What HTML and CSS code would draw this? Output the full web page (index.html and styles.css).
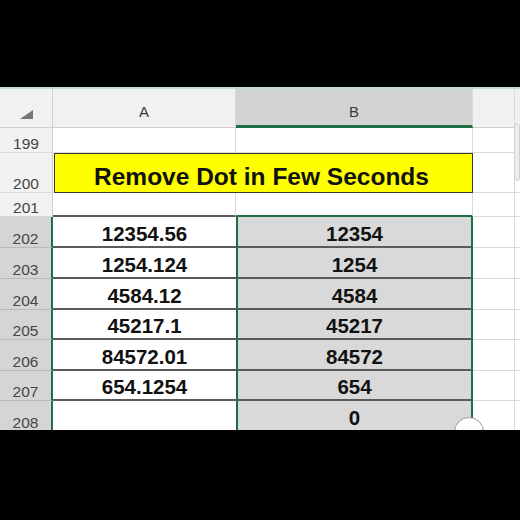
FILE: index.html
```html
<!DOCTYPE html>
<html>
<head>
<meta charset="utf-8">
<link rel="stylesheet" href="styles.css">
</head>
<body>
<div class="frame">
  <div class="bar"></div>
  <div class="sheet">
    <div class="grid">
      <div class="corner"><span class="tri"></span></div>
      <div class="colh">A</div>
      <div class="colh sel">B</div>
      <div class="colh"></div>
      <div class="colh last"></div>

      <div class="rowh">199</div>
      <div class="cell"></div>
      <div class="cell"></div>
      <div class="cell"></div>
      <div class="cell last"></div>

      <div class="rowh">200</div>
      <div class="cell title">Remove Dot in Few Seconds</div>
      <div class="cell"></div>
      <div class="cell last"></div>

      <div class="rowh">201</div>
      <div class="cell pre-a"></div>
      <div class="cell pre-b"></div>
      <div class="cell"></div>
      <div class="cell last"></div>

      <div class="rowh on">202</div>
      <div class="cell a">12354.56</div>
      <div class="cell b">12354</div>
      <div class="cell"></div>
      <div class="cell last"></div>

      <div class="rowh on">203</div>
      <div class="cell a">1254.124</div>
      <div class="cell b">1254</div>
      <div class="cell"></div>
      <div class="cell last"></div>

      <div class="rowh on">204</div>
      <div class="cell a">4584.12</div>
      <div class="cell b">4584</div>
      <div class="cell"></div>
      <div class="cell last"></div>

      <div class="rowh on">205</div>
      <div class="cell a">45217.1</div>
      <div class="cell b">45217</div>
      <div class="cell"></div>
      <div class="cell last"></div>

      <div class="rowh on">206</div>
      <div class="cell a">84572.01</div>
      <div class="cell b">84572</div>
      <div class="cell"></div>
      <div class="cell last"></div>

      <div class="rowh on">207</div>
      <div class="cell a">654.1254</div>
      <div class="cell b">654</div>
      <div class="cell"></div>
      <div class="cell last"></div>

      <div class="rowh on">208</div>
      <div class="cell a"></div>
      <div class="cell b">0</div>
      <div class="cell"></div>
      <div class="cell last"></div>
    </div>
    <div class="scroll"></div>
    <div class="handle"></div>
  </div>
  <div class="bar bottom"></div>
</div>
</body>
</html>
```

FILE: styles.css
```css
* { box-sizing: border-box; }
html, body { margin: 0; padding: 0; background: #000; }
body { font-family: "Liberation Sans", Arial, sans-serif; }

.frame {
  width: 520px;
  height: 520px;
  display: flex;
  flex-direction: column;
  background: #000;
}
.bar { height: 87px; background: #000; flex: none; }
.bar.bottom { height: 90px; }

.sheet {
  position: relative;
  height: 343px;
  flex: none;
  overflow: hidden;
  background: #fff;
  border-top: 2px solid #c5dccd;
}

.grid {
  display: grid;
  grid-template-columns: 53px 183px 237px 42px 5px;
  grid-template-rows: 39px 25px 40px 24px 31px 31px 31px 30px 31px 30px 31px;
}

.grid > div {
  display: flex;
  align-items: flex-end;
  justify-content: center;
  border-right: 1px solid #dadada;
  border-bottom: 1px solid #dadada;
  line-height: 1;
}
.grid > div.last { border-right: none; }

.corner {
  background: #f1f1f1;
  position: relative;
  border-right-color: #cfcfcf !important;
  border-bottom-color: #cfcfcf !important;
}
.tri {
  position: absolute;
  left: 20px;
  top: 21px;
  width: 0;
  height: 0;
  border-left: 13px solid transparent;
  border-bottom: 9px solid #767676;
}

.colh {
  background: #f1f1f1;
  color: #3a3a3a;
  font-size: 15px;
  padding-bottom: 8px;
  border-bottom-color: #cfcfcf !important;
}
.colh.sel {
  background: #d3d3d3;
  border-bottom: 3px solid #1e6f44 !important;
  padding-bottom: 6px;
}

.rowh {
  background: #f2f2f2;
  color: #454545;
  font-size: 15.5px;
  padding-bottom: 1px;
  border-right-color: #cfcfcf !important;
}
.rowh.on {
  background: #d5d5d5;
  border-right: 2px solid #1e6f44 !important;
  border-bottom-color: #b9b9b9 !important;
}

.cell { background: #fff; }

.title {
  grid-column: span 2;
  background: #ffff00;
  border: 1px solid #3a3a2a !important;
  margin-left: 1px;
  font-size: 24.5px;
  font-weight: bold;
  color: #111;
  padding-bottom: 3px;
  padding-right: 4px;
}

.pre-a { border-bottom: 2px solid #5a5a5a !important; }
.pre-b { border-bottom: 2px solid #1e6f44 !important; }

.a, .b {
  font-size: 20.5px;
  font-weight: bold;
  color: #111;
  padding-bottom: 2px;
  border-bottom: 2px solid #5a5a5a !important;
}
.a { border-right: none !important; }
.b {
  background: #d9d9d9;
  border-left: 2px solid #1e6f44;
  border-right: 2px solid #1e6f44 !important;
}

.scroll {
  position: absolute;
  left: 514px;
  top: 34px;
  width: 6px;
  height: 58px;
  background: #ececec;
  border: 1px solid #d0d0d0;
  border-radius: 3px;
}
.handle {
  position: absolute;
  left: 454px;
  top: 328px;
  width: 30px;
  height: 30px;
  border-radius: 50%;
  background: #fff;
  border: 1.5px solid #9a9a9a;
}
```
